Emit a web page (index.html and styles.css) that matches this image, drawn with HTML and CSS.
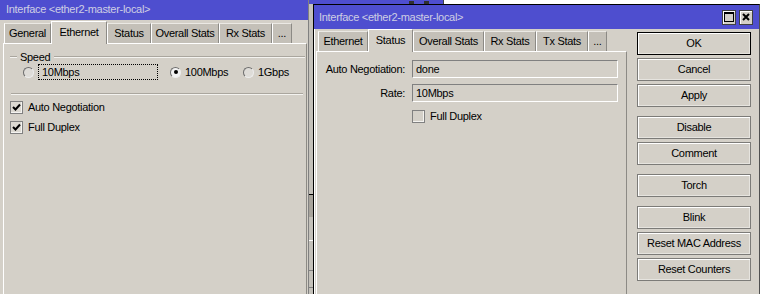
FILE: index.html
```html
<!DOCTYPE html>
<html lang="en">
<head>
    <meta charset="UTF-8">
    <title>Interface &lt;ether2-master-local&gt;</title>
    <link rel="stylesheet" href="styles.css">
</head>
<body>
    <div class="desk">

        <!-- window lying behind both dialogs -->
        <div class="win behind">
            <div class="titlebar">
                <span class="stub"></span>
                <span class="stub"></span>
            </div>
            <div class="behind-list">
                <div class="sel-row"></div>
                <div class="hl-line"></div>
                <div class="gr-line first"></div>
                <div class="gr-line"></div>
            </div>
        </div>

        <!-- back dialog: Ethernet tab -->
        <div class="win back">
            <div class="titlebar">
                <span class="title">Interface &lt;ether2-master-local&gt;</span>
            </div>
            <div class="tabs">
                <div class="tab">General</div>
                <div class="tab active">Ethernet</div>
                <div class="tab">Status</div>
                <div class="tab">Overall Stats</div>
                <div class="tab">Rx Stats</div>
                <div class="tab">...</div>
            </div>
            <div class="panel">
                <div class="group">
                    <div class="legend">
                        <span class="rule short"></span>
                        <span class="legend-text">Speed</span>
                        <span class="rule"></span>
                    </div>
                    <div class="radios">
                        <div class="radio"><span class="dot"></span><span class="focus">10Mbps</span></div>
                        <div class="radio"><span class="dot on"></span><span>100Mbps</span></div>
                        <div class="radio"><span class="dot"></span><span>1Gbps</span></div>
                    </div>
                    <div class="rule bottom"></div>
                </div>
                <div class="checks">
                    <div class="check">
                        <span class="box"><svg width="11" height="11" viewBox="0 0 11 11"><polyline points="2,5 4.5,7.5 9,2.5" fill="none" stroke="#000" stroke-width="2"/></svg></span>
                        <span>Auto Negotiation</span>
                    </div>
                    <div class="check">
                        <span class="box"><svg width="11" height="11" viewBox="0 0 11 11"><polyline points="2,5 4.5,7.5 9,2.5" fill="none" stroke="#000" stroke-width="2"/></svg></span>
                        <span>Full Duplex</span>
                    </div>
                </div>
            </div>
        </div>

        <!-- front dialog: Status tab -->
        <div class="win front">
            <div class="titlebar">
                <span class="title">Interface &lt;ether2-master-local&gt;</span>
                <div class="tb-buttons">
                    <span class="tb-btn"><svg width="10" height="10" viewBox="0 0 10 10"><rect x="0.5" y="0.5" width="9" height="9" fill="none" stroke="#000"/><line x1="0" y1="1.5" x2="10" y2="1.5" stroke="#000"/></svg></span>
                    <span class="tb-btn"><svg width="8" height="8" viewBox="0 0 8 8"><path d="M1 1 L7 7 M7 1 L1 7" stroke="#000" stroke-width="2"/></svg></span>
                </div>
            </div>
            <div class="win-body">
                <div class="main">
                    <div class="tabs">
                        <div class="tab">Ethernet</div>
                        <div class="tab active">Status</div>
                        <div class="tab">Overall Stats</div>
                        <div class="tab">Rx Stats</div>
                        <div class="tab">Tx Stats</div>
                        <div class="tab">...</div>
                    </div>
                    <div class="panel">
                        <div class="form">
                            <span class="lbl">Auto Negotiation:</span>
                            <span class="field">done</span>
                            <span class="lbl">Rate:</span>
                            <span class="field">10Mbps</span>
                            <div class="check in-form">
                                <span class="box"></span>
                                <span>Full Duplex</span>
                            </div>
                        </div>
                    </div>
                </div>
                <div class="buttons">
                    <div class="btn default">OK</div>
                    <div class="btn">Cancel</div>
                    <div class="btn">Apply</div>
                    <div class="btn group-start">Disable</div>
                    <div class="btn">Comment</div>
                    <div class="btn group-start">Torch</div>
                    <div class="btn group-start">Blink</div>
                    <div class="btn">Reset MAC Address</div>
                    <div class="btn">Reset Counters</div>
                </div>
            </div>
        </div>

    </div>
</body>
</html>
```

FILE: styles.css
```css
    body {
        margin: 0;
        background: #fff;
        font-family: "Liberation Sans", Arial, sans-serif;
        font-size: 11px;
        letter-spacing: -0.3px;
        color: #000;
        overflow: hidden;
    }

    .desk {
        position: relative;
        width: 776px;
        height: 294px;
        overflow: hidden;
    }

    /* windows */
    .win {
        position: absolute;
        box-sizing: border-box;
        background: #d4d0c8;
        display: flex;
        flex-direction: column;
    }

    .titlebar {
        background: #4e4ecf;
        color: #cfcfe4;
        display: flex;
        align-items: center;
        flex-shrink: 0;
    }

    .title {
        white-space: nowrap;
    }

    /* window behind */
    .behind {
        left: 308px;
        top: -20px;
        width: 136px;
        height: 330px;
        border: 1px solid #404040;
        background: #c4c1ba;
    }

    .behind .titlebar {
        height: 23px;
        justify-content: flex-end;
        align-items: flex-end;
        gap: 10px;
        padding-right: 14px;
    }

    .stub {
        width: 5px;
        height: 3px;
        background: #303030;
    }

    .behind-list {
        display: flex;
        flex-direction: column;
    }

    .sel-row {
        margin-top: 190px;
        height: 22px;
        background: #a8a49c;
        border-top: 1px solid #000;
    }

    .hl-line {
        margin-top: 23px;
        height: 1px;
        background: #fff;
    }

    .gr-line {
        height: 1px;
        background: #808080;
    }

    .gr-line.first {
        margin-top: 29px;
        margin-bottom: 16px;
    }

    /* back dialog */
    .back {
        left: -1px;
        top: -3px;
        width: 310px;
        height: 310px;
        border: 1px solid #404040;
        border-right-color: #808080;
    }

    .back .titlebar {
        height: 22px;
        padding-left: 6px;
    }

    .back .tabs {
        padding-top: 1px;
        margin-left: 4px;
    }

    .back .panel {
        margin: 0 1px 0 3px;
    }

    .back .tab:nth-child(1) { width: 47px; }
    .back .tab:nth-child(2) { width: 56px; }
    .back .tab:nth-child(3) { width: 44px; }
    .back .tab:nth-child(4) { width: 68px; }
    .back .tab:nth-child(5) { width: 53px; }
    .back .tab:nth-child(6) { width: 20px; }

    /* tabs */
    .tabs {
        display: flex;
        align-items: flex-end;
        flex-shrink: 0;
        position: relative;
        z-index: 1;
    }

    .tab {
        box-sizing: border-box;
        height: 20px;
        line-height: 18px;
        text-align: center;
        white-space: nowrap;
        background: #c4c0b8;
        border-top: 1px solid #ebe9e4;
        border-left: 1px solid #fff;
        border-right: 1px solid #8c8a85;
    }

    .tab.active {
        height: 23px;
        line-height: 20px;
        margin-bottom: -1px;
        background: #d4d0c8;
        border-top-color: #fff;
    }

    .panel {
        flex: 1;
        border-top: 1px solid #fff;
        border-left: 1px solid #fff;
        border-right: 1px solid #8c8a85;
    }

    /* speed group */
    .group {
        margin: 6px 1px 0 6px;
    }

    .legend {
        display: flex;
        align-items: center;
        height: 14px;
    }

    .rule {
        flex: 1;
        height: 0;
        border-top: 1px solid #aaa69e;
        border-bottom: 1px solid #f4f3f0;
    }

    .rule.short {
        flex: none;
        width: 7px;
    }

    .legend-text {
        padding: 0 4px 0 3px;
    }

    .rule.bottom {
        margin: 13px 2px 0 1px;
    }

    .radios {
        display: grid;
        grid-template-columns: 147px 73px 1fr;
        padding-left: 13px;
        height: 16px;
    }

    .radio {
        display: flex;
        align-items: center;
    }

    .dot {
        box-sizing: border-box;
        width: 11px;
        height: 11px;
        border-radius: 50%;
        border: 1px solid;
        border-color: #6c6c6c #ececec #ececec #6c6c6c;
        background: #dedcd8;
        margin-right: 4px;
        display: flex;
        align-items: center;
        justify-content: center;
    }

    .dot.on {
        background: #f2f2f2;
    }

    .dot.on::after {
        content: "";
        width: 4px;
        height: 4px;
        border-radius: 50%;
        background: #000;
    }

    .focus {
        box-sizing: border-box;
        width: 120px;
        height: 16px;
        line-height: 14px;
        padding-left: 3px;
        border: 1px dotted #000;
    }

    /* checkboxes */
    .checks {
        display: flex;
        flex-direction: column;
        gap: 4px;
        margin: 4px 0 0 6px;
    }

    .check {
        display: flex;
        align-items: center;
        gap: 5px;
        height: 16px;
    }

    .box {
        box-sizing: border-box;
        width: 13px;
        height: 13px;
        border: 1px solid #808080;
        box-shadow: inset -1px -1px 0 #f4f3f0;
        background: #dcd9d2;
        display: flex;
        align-items: center;
        justify-content: center;
    }

    /* front dialog */
    .front {
        left: 313px;
        top: 4px;
        width: 447px;
        height: 300px;
        border: 1px solid #000;
        border-right-color: #505050;
        box-shadow: inset 1px 0 0 #fff;
    }

    .front .titlebar {
        height: 24px;
        padding: 0 6px 0 5px;
        justify-content: space-between;
    }

    .tb-buttons {
        display: flex;
        gap: 3px;
    }

    .tb-btn {
        box-sizing: border-box;
        width: 14px;
        height: 15px;
        background: #d4d0c8;
        border: 1px solid #404040;
        box-shadow: inset 1px 1px 0 #fff;
        display: flex;
        align-items: center;
        justify-content: center;
    }

    .win-body {
        flex: 1;
        display: flex;
        gap: 10px;
        padding-left: 2px;
    }

    .main {
        width: 311px;
        display: flex;
        flex-direction: column;
    }

    .front .tabs {
        margin-left: 2px;
    }

    .front .tab:nth-child(1) { width: 50px; }
    .front .tab:nth-child(2) { width: 45px; }
    .front .tab:nth-child(3) { width: 71px; }
    .front .tab:nth-child(4) { width: 52px; }
    .front .tab:nth-child(5) { width: 52px; }
    .front .tab:nth-child(6) { width: 19px; }

    .front .tab.active {
        height: 23px;
    }

    .form {
        display: grid;
        grid-template-columns: 84px 206px;
        column-gap: 7px;
        row-gap: 6px;
        align-items: center;
        padding: 8px 0 0 4px;
    }

    .lbl {
        text-align: right;
        white-space: nowrap;
    }

    .field {
        box-sizing: border-box;
        height: 18px;
        line-height: 16px;
        padding-left: 3px;
        border: 1px solid;
        border-color: #808080 #fff #fff #808080;
    }

    .check.in-form {
        grid-column: 2;
    }

    .in-form .box {
        background: #d4d0c8;
    }

    /* right button column */
    .buttons {
        width: 114px;
        display: flex;
        flex-direction: column;
        gap: 3px;
        padding-top: 3px;
    }

    .btn {
        box-sizing: border-box;
        height: 23px;
        line-height: 21px;
        text-align: center;
        white-space: nowrap;
        border: 1px solid #7c7b78;
        box-shadow: inset 1px 1px 0 #fff, inset -1px -1px 0 #e6e4df;
    }

    .btn.default {
        border-color: #000;
    }

    .btn.group-start {
        margin-top: 6px;
    }
```
